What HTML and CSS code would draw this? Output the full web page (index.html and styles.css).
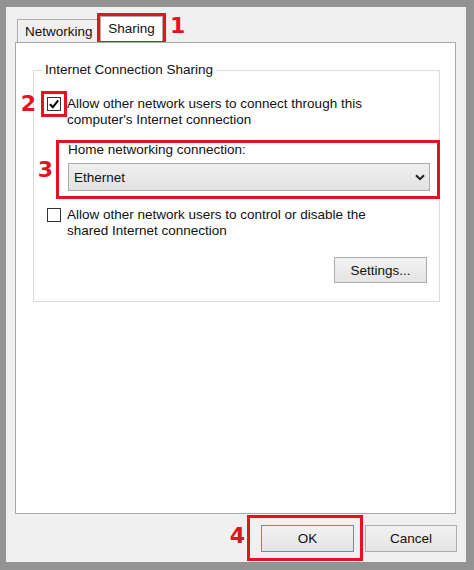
FILE: index.html
```html
<!DOCTYPE html>
<html>
<head lang="en">
    <meta charset="UTF-8">
    <title>Ethernet Properties</title>
    <link rel="stylesheet" href="styles.css">
</head>
<body>
<div class="g-dialog">
    <div class="m-tabs">
        <div class="tab">Networking</div>
        <div class="tab active">Sharing</div>
        <span class="step step-tab">1</span>
    </div>
    <div class="m-panel">
        <fieldset class="m-group">
            <legend>Internet Connection Sharing</legend>
            <div class="m-check first">
                <span class="box marked">
                    <svg width="12" height="12" viewBox="0 0 12 12"><path d="M2 6.2 L4.8 9.2 L10.2 2.4" fill="none" stroke="#000" stroke-width="2"/></svg>
                    <span class="step step-check">2</span>
                </span>
                <span class="text">Allow other network users to connect through this<br>computer's Internet connection</span>
            </div>
            <div class="m-home">
                <span class="step step-home">3</span>
                <div class="caption">Home networking connection:</div>
                <div class="combo">
                    <span>Ethernet</span>
                    <svg width="10" height="7" viewBox="0 0 10 7"><path d="M1 1.2 L5 5.2 L9 1.2" fill="none" stroke="#222" stroke-width="2"/></svg>
                </div>
            </div>
            <div class="m-check second">
                <span class="box"></span>
                <span class="text">Allow other network users to control or disable the<br>shared Internet connection</span>
            </div>
            <div class="m-settings">
                <button class="btn btn-settings">Settings...</button>
            </div>
        </fieldset>
    </div>
    <div class="m-actions">
        <span class="step step-ok">4</span>
        <span class="mark-ok"><button class="btn default">OK</button></span>
        <button class="btn btn-cancel">Cancel</button>
    </div>
</div>
</body>
</html>
```

FILE: styles.css
```css
* {
    margin: 0;
    padding: 0;
    box-sizing: border-box;
}
body {
    height: 570px;
    overflow: hidden;
    background-color: #939393;
    font-family: "Liberation Sans", Arial, sans-serif;
    font-size: 13.5px;
    color: #111;
}
.g-dialog {
    display: flex;
    flex-direction: column;
    height: 555px;
    margin: 7px 8px 0 6px;
    background-color: #f0f0f0;
}
/* red annotation digits */
.step {
    font-family: "DejaVu Sans", sans-serif;
    font-weight: bold;
    font-size: 22px;
    line-height: 22px;
    color: #e2141f;
}

.m-tabs {
    display: flex;
    align-items: flex-end;
    height: 35px;
    padding-left: 11px;
}
.m-tabs .tab {
    height: 23px;
    line-height: 23px;
    border: 1px solid #acacac;
    border-bottom: none;
    background-color: #f0f0f0;
}
.m-tabs .tab:first-child {
    width: 83px;
    padding-left: 7px;
}
.m-tabs .tab.active {
    width: 63px;
    height: 25px;
    margin-bottom: 1px;
    text-align: center;
    line-height: 24px;
    background-color: #fff;
    outline: 3px solid #e2141f;
}
.step-tab {
    align-self: flex-start;
    margin: 8px 0 0 7px;
}

.m-panel {
    flex: 1;
    margin: 0 10px 0 9px;
    padding: 0 15px 0 17px;
    border: 1px solid #a8a8a8;
    background-color: #fff;
}
.m-group {
    margin-top: 19px;
    padding: 0 0 18px;
    border: 1px solid #dcdcdc;
}
.m-group legend {
    margin-left: 8px;
    padding: 0 3px;
    line-height: 16px;
}

.m-check {
    display: flex;
    align-items: flex-start;
    gap: 6px;
    margin-left: 13px;
    line-height: 16px;
}
.m-check.first {
    margin-top: 18px;
}
.m-check.second {
    margin-top: 11px;
}
.m-check .box {
    position: relative;
    display: flex;
    align-items: center;
    justify-content: center;
    width: 14px;
    height: 14px;
    margin-top: 1px;
    border: 1px solid #333;
    background-color: #fff;
}
.m-check .box.marked {
    outline: 3px solid #e2141f;
    outline-offset: 3px;
}
.step-check {
    position: absolute;
    top: -5px;
    right: calc(100% + 12px);
}

.m-home {
    position: relative;
    margin: 15px 2px 0 25px;
    padding: 0 7px 5px 9px;
    outline: 3px solid #e2141f;
}
.m-home .caption {
    line-height: 14px;
}
.step-home {
    position: absolute;
    top: 16px;
    right: calc(100% + 6px);
}
.combo {
    display: flex;
    align-items: center;
    justify-content: space-between;
    height: 28px;
    margin-top: 6px;
    padding: 0 4px 0 5px;
    border: 1px solid #acacac;
    background: linear-gradient(#efefef, #e3e3e3);
}

.btn {
    font-family: inherit;
    font-size: 13.5px;
    color: #111;
    border: 1px solid #acacac;
    background: linear-gradient(#f2f2f2, #e4e4e4);
}
.m-settings {
    display: flex;
    justify-content: flex-end;
    margin: 18px 12px 0 0;
}
.btn-settings {
    width: 93px;
    height: 26px;
}

.m-actions {
    display: flex;
    justify-content: flex-end;
    align-items: center;
    height: 48px;
    padding-right: 9px;
}
.step-ok {
    margin: 0 2px 4px 0;
}
.mark-ok {
    display: flex;
    padding: 7px 6px 6px 11px;
    border: 3px solid #e2141f;
}
.btn.default {
    width: 93px;
    height: 27px;
    border-color: #4d94d9;
}
.btn-cancel {
    width: 92px;
    height: 27px;
    margin-left: 2px;
}
```
